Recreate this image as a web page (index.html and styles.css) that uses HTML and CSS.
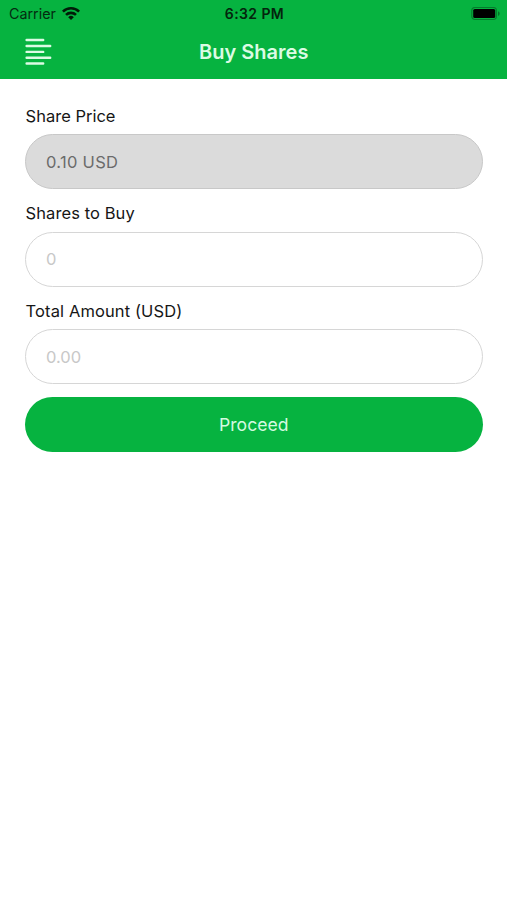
FILE: index.html
```html
<!DOCTYPE html>
<html lang="en">
<head>
<meta charset="utf-8">
<title>Buy Shares</title>
<link rel="stylesheet" href="styles.css">
</head>
<body>
<header class="header">
  <div class="status">
    <div class="status-left">
      <span class="carrier">Carrier</span>
      <svg class="wifi" width="18" height="14" viewBox="0 0 18 14" fill="none" stroke="currentColor" stroke-width="2.6">
        <path d="M.9 4.6a11.6 11.6 0 0 1 16.2 0"/>
        <path d="M4 7.9a7.2 7.2 0 0 1 10 0"/>
        <path d="M9 13 6.2 10.2a4 4 0 0 1 5.6 0Z" fill="currentColor" stroke="none"/>
      </svg>
    </div>
    <span class="time">6:32 PM</span>
    <svg class="battery" width="30" height="14" viewBox="0 0 30 14">
      <rect x=".8" y=".5" width="24.6" height="12" rx="3.2" fill="none" stroke="#000" stroke-opacity=".3" stroke-width="1.2"/>
      <rect x="2.2" y="2" width="22" height="9" rx="1.6"/>
      <path d="M27 4.3c2.2.8 2.2 3.8 0 4.6Z" fill-opacity=".35"/>
    </svg>
  </div>
  <nav class="navbar">
    <svg class="menu" width="28" height="28" viewBox="0 0 28 28" fill="none" stroke="currentColor" stroke-width="2.4" stroke-linecap="round">
      <path d="M1.6 2h16.6M1.6 8h23.6M1.6 13.9h16.6M1.6 19.7h23.6M1.6 25.5h16.6"/>
    </svg>
    <h1 class="title">Buy Shares</h1>
  </nav>
</header>
<main class="form">
  <label class="label" for="price">Share Price</label>
  <input class="field field-disabled" id="price" value="0.10 USD" disabled>
  <label class="label label-shares" for="shares">Shares to Buy</label>
  <input class="field" id="shares" placeholder="0">
  <label class="label label-total" for="total">Total Amount (USD)</label>
  <input class="field" id="total" placeholder="0.00">
  <button class="proceed">Proceed</button>
</main>
</body>
</html>
```
FILE: styles.css
```css
* { box-sizing: border-box; }
body {
  margin: 0;
  min-height: 900px;
  background: #fff;
  color: #161616;
  font-family: Inter, "Liberation Sans", sans-serif;
}
.header {
  height: 79.3px;
  background: #06b340;
}
.status {
  display: grid;
  grid-template-columns: 1fr auto 1fr;
  align-items: center;
  height: 27px;
  padding: 0 6px 0 9px;
  color: #042b10;
  font-size: 14px;
}
.status-left {
  display: flex;
  align-items: center;
  gap: 6px;
}
.carrier { font-size: 14.3px; }
.wifi { color: #001c08; }
.time {
  margin-right: 1px;
  color: #04240d;
  font-size: 14px;
  font-weight: 600;
  letter-spacing: .4px;
}
.battery { justify-self: end; }
.navbar {
  display: grid;
  grid-template-columns: 28px 1fr 28px;
  align-items: center;
  height: 50px;
  padding: 0 24.5px 0 25px;
  color: #dcfbe4;
}
.title {
  margin: 0;
  text-align: center;
  font-size: 20px;
  font-weight: 600;
  line-height: 28px;
}
.form {
  display: flex;
  flex-direction: column;
  padding: 25.7px 24.5px 0 25px;
}
.label {
  height: 23px;
  margin-bottom: 6.2px;
  padding-left: .6px;
  font-size: 16.5px;
  line-height: 23px;
}
.label-shares { letter-spacing: .08px; }
.label-total { letter-spacing: .11px; }
.field {
  width: 100%;
  height: 55.3px;
  margin: 0 0 12.95px;
  padding: 0 20px;
  border: 1.3px solid #d6d6d6;
  border-radius: 28px;
  background: #fff;
  color: #161616;
  font-family: inherit;
  font-size: 16.5px;
}
.field::placeholder { color: #c8c8c8; opacity: 1; }
.field-disabled {
  border-color: #c8c8c8;
  background: #dbdbdb;
  color: #6b6b6b;
  letter-spacing: .3px;
}
.proceed {
  height: 54.8px;
  margin: -.4px 0 0;
  padding: 0;
  border: 0;
  border-radius: 28px;
  background: #06b340;
  color: #d5fae0;
  font-family: inherit;
  font-size: 17.6px;
}
```
